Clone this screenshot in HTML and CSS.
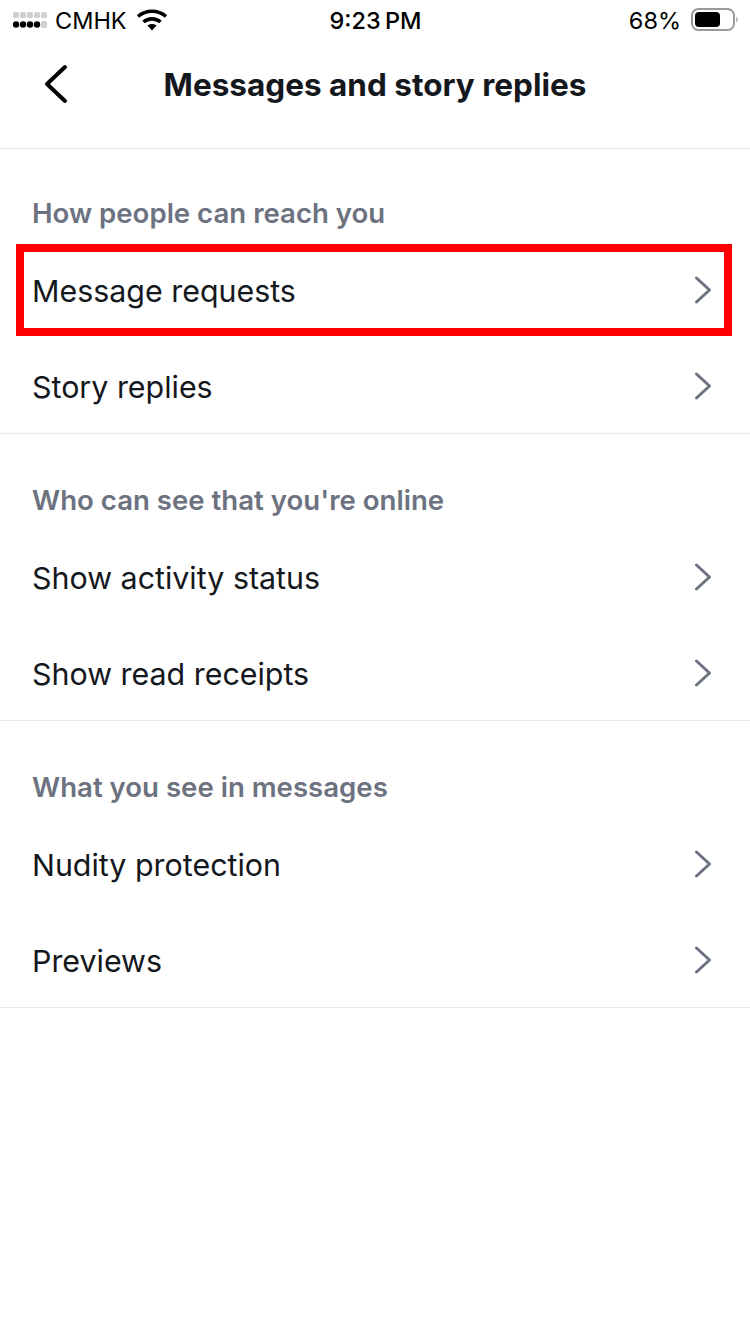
FILE: index.html
```html
<!DOCTYPE html>
<html lang="en">
<head>
    <meta charset="UTF-8">
    <meta name="viewport" content="width=device-width, initial-scale=1.0">
    <title>Messages and story replies</title>
    <link rel="stylesheet" href="styles.css">
</head>
<body>
    <div class="status-bar">
        <div class="status-left">
            <svg class="signal" width="34" height="18" viewBox="0 0 34 18">
                <g fill="#d0d0d0">
                    <rect x="0" y="1" width="6" height="6" rx="1.5"/><rect x="7" y="1" width="6" height="6" rx="1.5"/><rect x="14" y="1" width="6" height="6" rx="1.5"/><rect x="21" y="1" width="6" height="6" rx="1.5"/><rect x="28" y="1" width="6" height="6" rx="1.5"/>
                    <rect x="28" y="10" width="6" height="7" rx="1.5"/>
                </g>
                <g fill="#000">
                    <circle cx="3" cy="13.5" r="3.2"/><circle cx="10" cy="13.5" r="3.2"/><circle cx="17" cy="13.5" r="3.2"/><circle cx="24" cy="13.5" r="3.2"/>
                </g>
            </svg>
            <span>CMHK</span>
            <svg class="wifi" width="30" height="22" viewBox="0 0 30 22">
                <path d="M1 7.5C8.8.5 21.2.5 29 7.5" fill="none" stroke="#000" stroke-width="3.6"/>
                <path d="M6.5 13c4.8-4.2 12.2-4.2 17 0" fill="none" stroke="#000" stroke-width="3.6"/>
                <path d="M10.5 16.6c2.6-2 6.4-2 9 0L15 21.5z" fill="#000"/>
            </svg>
        </div>
        <div class="status-time">9:23 PM</div>
        <div class="status-right">
            <span>68%</span>
            <svg class="battery" width="47" height="24" viewBox="0 0 47 24">
                <rect x="1" y="1" width="42" height="21" rx="6.5" fill="none" stroke="#999" stroke-width="2"/>
                <rect x="4" y="4" width="25" height="15" rx="4" fill="#000"/>
                <path d="M45 8.5c1.2.5 2 1.6 2 3s-.8 2.5-2 3z" fill="#bbb"/>
            </svg>
        </div>
    </div>

    <header class="nav">
        <svg class="back" width="26" height="40" viewBox="0 0 26 40">
            <path d="M22 3L4 20l18 17" fill="none" stroke="#000" stroke-width="4" stroke-linecap="round" stroke-linejoin="round"/>
        </svg>
        <h1>Messages and story replies</h1>
    </header>

    <section class="section first">
        <h2>How people can reach you</h2>
        <a class="row highlighted"><span>Message requests</span><svg class="chevron" width="18" height="28" viewBox="0 0 18 28"><path d="M2.5 2l13 12-13 12" /></svg></a>
        <a class="row"><span>Story replies</span><svg class="chevron" width="18" height="28" viewBox="0 0 18 28"><path d="M2.5 2l13 12-13 12" /></svg></a>
    </section>

    <section class="section">
        <h2>Who can see that you're online</h2>
        <a class="row"><span>Show activity status</span><svg class="chevron" width="18" height="28" viewBox="0 0 18 28"><path d="M2.5 2l13 12-13 12" /></svg></a>
        <a class="row"><span>Show read receipts</span><svg class="chevron" width="18" height="28" viewBox="0 0 18 28"><path d="M2.5 2l13 12-13 12" /></svg></a>
    </section>

    <section class="section">
        <h2>What you see in messages</h2>
        <a class="row"><span>Nudity protection</span><svg class="chevron" width="18" height="28" viewBox="0 0 18 28"><path d="M2.5 2l13 12-13 12" /></svg></a>
        <a class="row"><span>Previews</span><svg class="chevron" width="18" height="28" viewBox="0 0 18 28"><path d="M2.5 2l13 12-13 12" /></svg></a>
    </section>
</body>
</html>
```

FILE: styles.css
```css
body {
    margin: 0;
    height: 1334px;
    overflow: hidden;
    background-color: #fff;
    color: #14181d;
    font-family: Inter, "Liberation Sans", sans-serif;
}

.status-bar {
    display: grid;
    grid-template-columns: 1fr auto 1fr;
    align-items: center;
    height: 40px;
    padding: 0 12px 0 13px;
    color: #000;
    font-size: 23.5px;
}

.status-left {
    display: flex;
    align-items: center;
    gap: 8px;
}

.status-left .wifi {
    margin-left: 2px;
}

.status-time {
    font-weight: 500;
    word-spacing: -2px;
}

.status-right {
    display: flex;
    align-items: center;
    justify-content: flex-end;
    gap: 10px;
}

.nav {
    display: flex;
    align-items: center;
    justify-content: center;
    position: relative;
    height: 108px;
    border-bottom: 1px solid #e8eaed;
}

.nav h1 {
    margin: 0 0 20px;
    font-size: 31.5px;
    font-weight: 700;
}

.back {
    position: absolute;
    left: 43px;
    top: 24px;
}

.section {
    height: 286px;
    border-bottom: 1px solid #e8eaed;
}

.section.first {
    height: 284px;
}

.section h2 {
    display: flex;
    align-items: center;
    height: 44px;
    margin: 0;
    padding: 44px 32px 0;
    color: #6c7280;
    font-size: 27.6px;
    font-weight: 600;
}

.section.first h2 {
    padding-top: 42px;
}

.row {
    display: flex;
    align-items: center;
    justify-content: space-between;
    position: relative;
    height: 92px;
    margin-top: 4px;
    padding: 0 38px 0 32px;
    font-size: 30.4px;
}

.section h2 + .row {
    margin-top: 10px;
}

.row.highlighted::after {
    content: "";
    position: absolute;
    top: -1px;
    bottom: 1px;
    left: 16px;
    right: 18px;
    border: 8px solid #ff0000;
}

.chevron {
    margin-top: -2px;
}

.chevron path {
    fill: none;
    stroke: #6c7280;
    stroke-width: 3;
    stroke-linecap: round;
    stroke-linejoin: round;
}
```
